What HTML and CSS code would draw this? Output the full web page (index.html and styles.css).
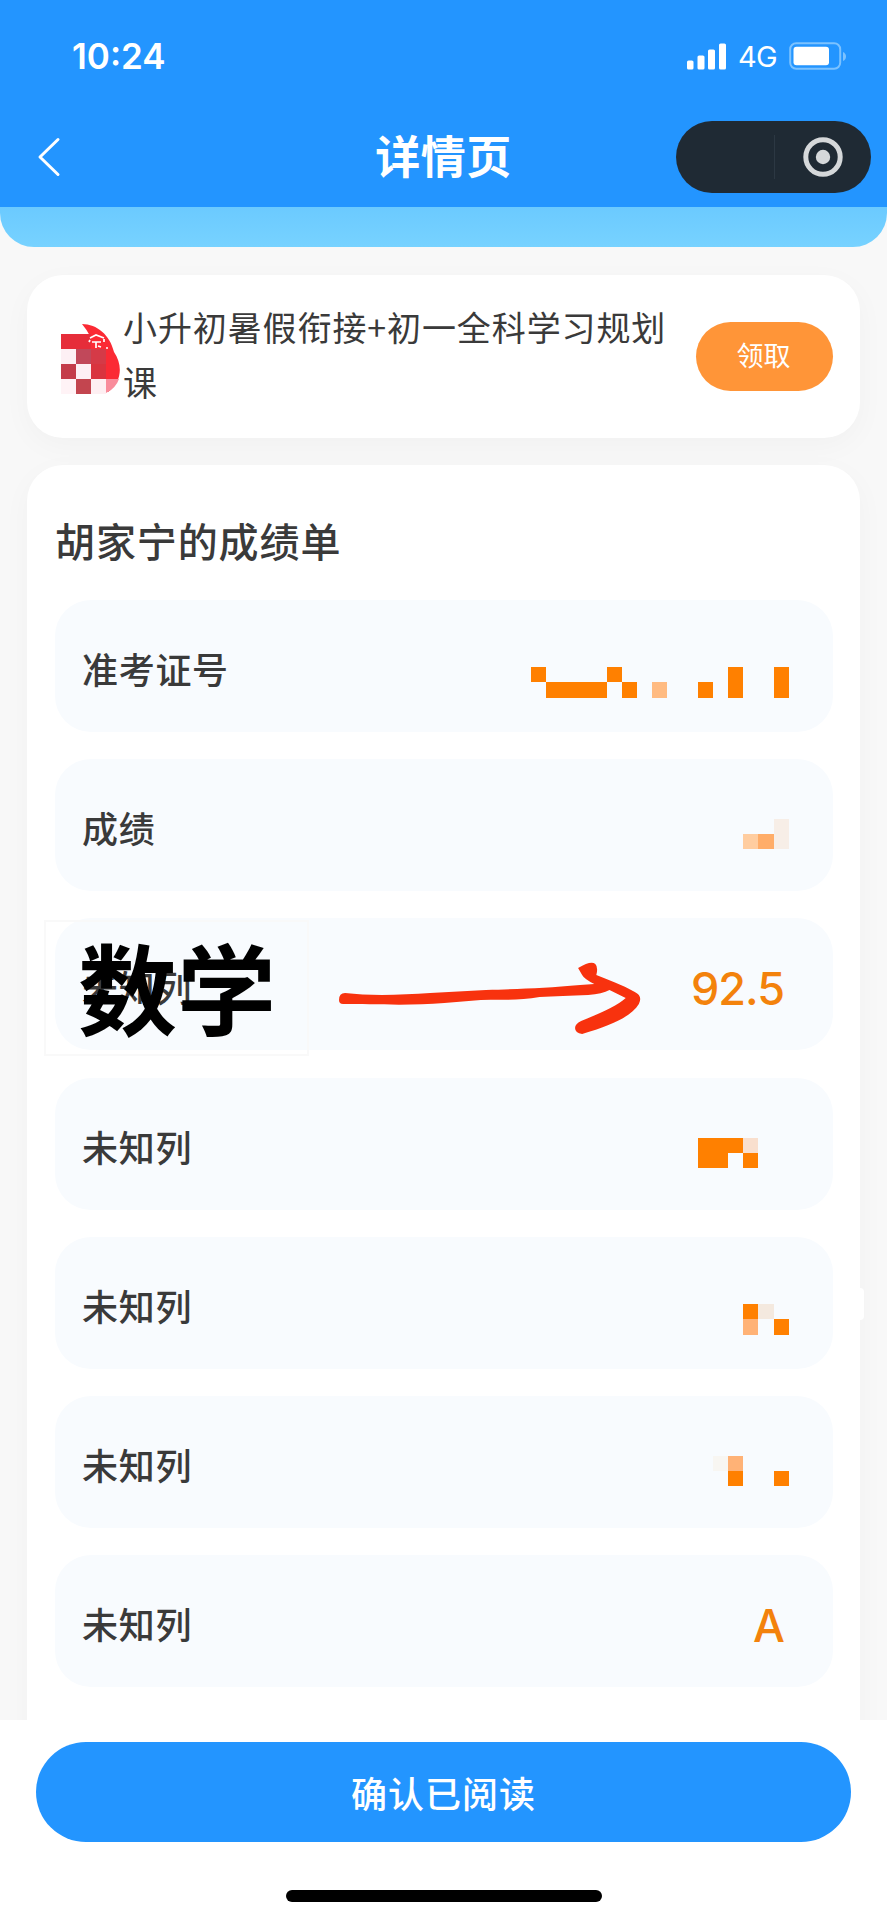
FILE: index.html
```html
<!DOCTYPE html>
<html lang="zh-CN">
<head>
  <meta charset="UTF-8">
  <meta name="viewport" content="width=device-width, initial-scale=1.0">
  <title>详情页</title>
  <link rel="stylesheet" href="styles.css">
</head>
<body>
  <header class="header">
    <div class="status-bar">
      <span class="time">10:24</span>
      <div class="status-right">
        <svg class="signal" width="40" height="27" viewBox="0 0 40 27" fill="#fff">
          <rect x="0" y="17.5" width="6.5" height="9" rx="1.6"/>
          <rect x="10.5" y="12.5" width="7" height="14" rx="1.6"/>
          <rect x="21" y="6.5" width="7" height="20" rx="1.6"/>
          <rect x="32" y="0.5" width="7" height="26" rx="1.6"/>
        </svg>
        <span class="network">4G</span>
        <svg class="battery" width="58" height="28" viewBox="0 0 58 28">
          <rect x="1.2" y="1.2" width="50" height="25.5" rx="6" fill="none" stroke="#7cc2ff" stroke-width="2"/>
          <rect x="4.5" y="4.8" width="35.5" height="18.4" rx="3" fill="#fff"/>
          <path d="M54 10v9q3-1.5 3-4.5t-3-4.5z" fill="#7cc2ff"/>
        </svg>
      </div>
    </div>
    <div class="nav-bar">
      <svg class="back" width="24" height="40" viewBox="0 0 24 40" fill="none" stroke="#fff" stroke-width="3" stroke-linecap="round" stroke-linejoin="round">
        <path d="M21 2.5L3 20l18 17.5"/>
      </svg>
      <h1 class="nav-title">详情页</h1>
      <div class="capsule">
        <span class="capsule-line"></span>
        <svg class="capsule-close" width="40" height="40" viewBox="0 0 40 40">
          <circle cx="20" cy="20" r="17.2" fill="none" stroke="#d5d8da" stroke-width="5"/>
          <circle cx="20" cy="20" r="7.2" fill="#d5d8da"/>
        </svg>
      </div>
    </div>
  </header>

  <main class="content">
    <div class="banner"></div>

    <section class="card course">
      <svg class="course-logo" width="60" height="74" viewBox="0 0 60 74">
        <path d="M22 2C37 2 50 13 54 30C63 43 62 60 48 70L30 50L30 14Q27 8 22 2z" fill="#fb2a34"/>
        <rect x="1" y="12" width="30" height="15" fill="#e62d3a"/>
        <rect x="1" y="27" width="15" height="15" fill="#fdf0f4"/>
        <rect x="16" y="27" width="15" height="15" fill="#c1485a"/>
        <rect x="31" y="27" width="15" height="15" fill="#d53a47"/>
        <rect x="1" y="42" width="15" height="15" fill="#c43c4a"/>
        <rect x="16" y="42" width="15" height="15" fill="#fdeff4"/>
        <rect x="31" y="42" width="15" height="15" fill="#d9343f"/>
        <rect x="1" y="57" width="15" height="15" fill="#fff3f6"/>
        <rect x="16" y="57" width="15" height="15" fill="#c3454f"/>
        <rect x="31" y="57" width="15" height="15" fill="#feeff2"/>
        <path d="M46 57h13q-3 9-13 14z" fill="#f98c9b"/>
        <path d="M30 16l6-3 8 3M30 18l-1 2M44 17v3M32 20h9M36 20v6M38 24l3 1M46 26h2" fill="none" stroke="#fff" stroke-width="1.7"/>
      </svg>
      <p class="course-name">小升初暑假衔接+初一全科学习规划课</p>
      <button class="get-btn">领取</button>
    </section>

    <section class="card report">
      <h2 class="report-title">胡家宁的成绩单</h2>
      <div class="rows">
        <div class="row">
          <span class="label">准考证号</span>
          <svg class="mosaic" width="258" height="132" viewBox="0 0 258 132" fill="#ff8000" shape-rendering="crispEdges">
            <path d="M0 67h15v15H0zM15 82h61v16H15zM76 67h15v15H76zM91 82h15v16H91zM167 82h15v16h-15zM197 67h15v31h-15zM243 67h15v31h-15z"/>
            <rect x="121" y="82" width="15" height="16" fill="#ffbb82"/>
          </svg>
        </div>
        <div class="row">
          <span class="label">成绩</span>
          <svg class="mosaic" width="46" height="132" viewBox="0 0 46 132" shape-rendering="crispEdges">
            <rect x="0" y="75" width="15" height="15" fill="#ffcda0"/>
            <rect x="15" y="75" width="16" height="15" fill="#ffad69"/>
            <rect x="31" y="60" width="15" height="30" fill="#f7eee7"/>
          </svg>
        </div>
        <div class="row row-math">
          <span class="label">未知列</span>
          <div class="note">数学</div>
          <svg class="arrow" width="310" height="76" viewBox="0 0 306 76" preserveAspectRatio="none" fill="#f8320e">
            <path d="M0 38Q0 31 6 31C30 34 62 33 90 31L145 28C180 27 205 26 238 23L252 22Q242 17 240 13L236 6Q249-2 253 2Q256 5 254 13C266 18 280 23 292 30Q300 34 296 42C289 54 270 63 240 72Q233 71 233 66Q233 62 239 59C258 51 275 44 283 36L267 28Q260 32 246 33Q220 34 198 35C178 39 160 37 140 38L104 41C70 44 32 42 4 42Q0 42 0 38z"/>
          </svg>
          <span class="value">92.5</span>
        </div>
        <div class="row">
          <span class="label">未知列</span>
          <svg class="mosaic mosaic-left" width="61" height="132" viewBox="0 0 61 132" fill="#ff8000" shape-rendering="crispEdges">
            <path d="M0 60h45v15H30v15H0zM45 75h15v15H45z"/>
            <rect x="45" y="60" width="15" height="15" fill="#f9dfce"/>
          </svg>
        </div>
        <div class="row">
          <span class="label">未知列</span>
          <svg class="mosaic" width="46" height="132" viewBox="0 0 46 132" fill="#ff8000" shape-rendering="crispEdges">
            <path d="M0 67h15v15H0zM31 82h15v16H31z"/>
            <rect x="0" y="82" width="15" height="16" fill="#ffb276"/>
            <rect x="15" y="67" width="16" height="15" fill="#f4e9df"/>
          </svg>
        </div>
        <div class="row">
          <span class="label">未知列</span>
          <svg class="mosaic" width="76" height="132" viewBox="0 0 76 132" fill="#ff8000" shape-rendering="crispEdges">
            <path d="M15 75h15v15H15zM61 75h15v15H61z"/>
            <rect x="0" y="60" width="15" height="15" fill="#f8f6f2"/>
            <rect x="15" y="60" width="15" height="15" fill="#ffb276"/>
          </svg>
        </div>
        <div class="row">
          <span class="label">未知列</span>
          <span class="value">A</span>
        </div>
      </div>
      <span class="side-tab"></span>
    </section>
  </main>

  <footer class="footer">
    <button class="confirm-btn">确认已阅读</button>
    <div class="home-indicator"></div>
  </footer>
</body>
</html>
```
FILE: styles.css
```css
* {
  box-sizing: border-box;
}
body {
  margin: 0;
  height: 1920px;
  display: flex;
  flex-direction: column;
  overflow: hidden;
  background: #f8f8f8;
  color: #3a3a3a;
  font-family: "Noto Sans CJK SC", sans-serif;
}
svg {
  display: block;
  flex-shrink: 0;
}
button {
  border: none;
  padding: 0;
  font-family: inherit;
  color: #fff;
}

/* header */
.header {
  height: 207px;
  flex-shrink: 0;
  background: #2395ff;
  color: #fff;
}
.status-bar {
  height: 112px;
  padding: 0 40px 0 72px;
  display: flex;
  align-items: center;
  justify-content: space-between;
}
.time {
  font: 600 35px/40px Inter, sans-serif;
}
.status-right {
  display: flex;
  align-items: center;
}
.network {
  margin: 2px 12px 0 11px;
  font: 400 29px/34px Inter, sans-serif;
  letter-spacing: -0.7px;
}
.nav-bar {
  height: 90px;
  padding: 0 16px 0 37px;
  display: grid;
  grid-template-columns: 1fr auto 1fr;
  align-items: center;
}
.nav-title {
  margin: -5px 0 0 -21px;
  font-size: 45px;
  line-height: 60px;
  font-weight: 700;
  letter-spacing: 0.5px;
}
.capsule {
  justify-self: end;
  width: 195px;
  height: 72px;
  padding-right: 28px;
  border-radius: 36px;
  background: #1f2a34;
  display: flex;
  align-items: center;
  justify-content: flex-end;
  gap: 28px;
}
.capsule-line {
  width: 1px;
  height: 44px;
  background: #2c3843;
}

/* content */
.content {
  flex: 1;
  min-height: 0;
  overflow: hidden;
}
.banner {
  height: 40px;
  border-radius: 0 0 34px 34px;
  background: linear-gradient(#6bcaff, #77d2ff);
}
.card {
  margin: 0 27px;
  border-radius: 36px;
  background: #fff;
  box-shadow: 0 8px 30px rgba(0, 0, 0, 0.03);
}
.course {
  height: 163px;
  margin-top: 28px;
  padding: 0 27px 0 33px;
  display: flex;
  align-items: center;
}
.course-logo {
  margin-top: 5px;
}
.course-name {
  width: 560px;
  margin: -6px auto 0 3px;
  font-size: 34px;
  line-height: 55px;
  font-weight: 400;
  letter-spacing: 0.9px;
  word-break: break-all;
}
.get-btn {
  width: 137px;
  height: 69px;
  padding: 0 2px 4px 0;
  border-radius: 35px;
  background: #ff9538;
  font-size: 27px;
}

/* report */
.report {
  position: relative;
  height: 1300px;
  margin-top: 27px;
  padding: 45px 27px 0 28px;
}
.report-title {
  margin: 0;
  height: 60px;
  line-height: 60px;
  font-size: 40px;
  font-weight: 500;
  letter-spacing: 0.9px;
}
.rows {
  margin-top: 30px;
  display: flex;
  flex-direction: column;
  gap: 27.2px;
}
.row {
  position: relative;
  height: 132px;
  padding: 0 49px 0 27px;
  border-radius: 36px;
  background: #f8fbfe;
  display: flex;
  align-items: center;
  justify-content: space-between;
}
.label {
  margin-top: 4px;
  font-size: 36px;
  line-height: 54px;
  font-weight: 500;
  letter-spacing: 0.7px;
}
.value {
  margin-top: 10px;
  color: #f3820c;
  font: 500 45px/54px Inter, sans-serif;
  letter-spacing: -1px;
}
.mosaic {
  margin-right: -5px;
}
.mosaic-left {
  margin-right: 25px;
}

/* hand-drawn note on top of the row */
.note {
  position: absolute;
  left: -11px;
  top: 2px;
  width: 265px;
  height: 136px;
  padding-left: 32px;
  border: 2px solid #f9f9f9;
  color: #000;
  font-size: 99px;
  line-height: 126px;
  font-weight: 700;
}
.arrow {
  position: absolute;
  left: 284px;
  top: 44px;
}
.side-tab {
  position: absolute;
  right: -4px;
  top: 823px;
  width: 10px;
  height: 32px;
  border-radius: 4px;
  background: #fff;
}

/* footer */
.footer {
  height: 200px;
  flex-shrink: 0;
  padding: 22px 36px 0;
  background: #fff;
}
.confirm-btn {
  display: block;
  width: 100%;
  height: 100px;
  border-radius: 50px;
  background: #2395ff;
  font-size: 36px;
  font-weight: 500;
  letter-spacing: 1px;
}
.home-indicator {
  width: 316px;
  height: 12px;
  margin: 48px auto 0;
  border-radius: 6px;
  background: #000;
}
```
